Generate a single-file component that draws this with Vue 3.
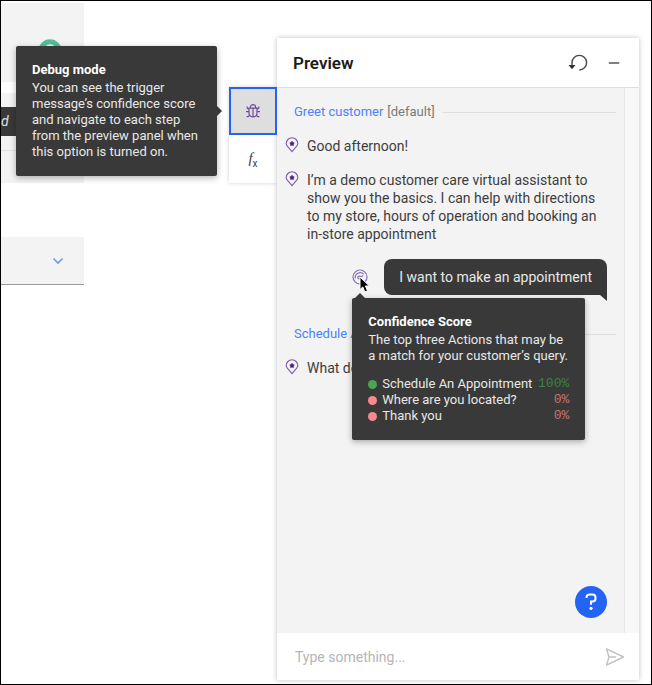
<script setup>
import { ref } from 'vue'

const draft = ref('')
const intro = [
  'Good afternoon!',
  'I’m a demo customer care virtual assistant to show you the basics. I can help with directions to my store, hours of operation and booking an in-store appointment',
]
const scores = [
  { name: 'Schedule An Appointment', value: '100%', kind: 'high' },
  { name: 'Where are you located?', value: '0%', kind: 'low' },
  { name: 'Thank you', value: '0%', kind: 'low' },
]
</script>

<template>
  <div class="frame">
    <svg class="defs" aria-hidden="true">
      <symbol id="pin" viewBox="0 0 14 16">
        <path d="M7 14.6 2.3 9.2A5.7 5.7 0 0 1 1.2 6.6a5.8 5.8 0 1 1 11.6 0 5.7 5.7 0 0 1-1.1 2.6Z" fill="none" stroke="#7d5cae" stroke-width="1.1" />
        <path d="m7 4.3.8 1.2 1.4.4-.9 1.1.1 1.5L7 8l-1.4.5.1-1.5-.9-1.1 1.4-.4Z" fill="#491d8b" stroke="#491d8b" stroke-width=".7" />
      </symbol>
    </svg>

    <section class="canvas" aria-label="Steps">
      <div class="block first">
        <svg class="ring" viewBox="0 0 24 24" aria-hidden="true"><circle cx="12" cy="12" r="9.2" fill="none" stroke="#56bd98" stroke-width="5" /></svg>
      </div>
      <div class="block second">
        <div class="chip">d</div>
        <hr class="divider" />
      </div>
      <button class="block picker" type="button" aria-label="Expand">
        <svg width="12" height="8" viewBox="0 0 12 8" aria-hidden="true"><path d="m1.5 1.5 4.5 4.6 4.5-4.6" fill="none" stroke="#6c98f5" stroke-width="1.5" /></svg>
      </button>
    </section>

    <nav class="rail" aria-label="Preview tools">
      <div class="tool-slot">
        <button class="tool active" type="button" aria-label="Debug mode" aria-describedby="debug-tip">
          <svg width="16" height="16" viewBox="0 0 16 16" fill="none" stroke="#6b4c9c" stroke-width="1.2" aria-hidden="true">
            <path d="M5.4 5V4.2a2.6 2.6 0 0 1 5.2 0V5M4 5.1h8v5.2a4 3.6 0 0 1-8 0ZM8 5.1v8.8M2.2 3.4v1.8L4 6.2M13.8 3.4v1.8L12 6.2M1 8.7h3M12 8.7h3M1.6 13.6h1.6l1.6-1.5M14.4 13.6h-1.6l-1.6-1.5" />
          </svg>
        </button>
        <div id="debug-tip" class="tip debug-tip" role="tooltip">
          <strong>Debug mode</strong>
          <p>You can see the trigger message’s confidence score and navigate to each step from the preview panel when this option is turned on.</p>
        </div>
      </div>
      <button class="tool fx" type="button" aria-label="Variables"><span><i>f</i><sub>x</sub></span></button>
    </nav>

    <main class="panel">
      <header class="head">
        <h1>Preview</h1>
        <button class="icon" type="button" aria-label="Restart">
          <svg width="20" height="18" viewBox="0 0 20 18" aria-hidden="true">
            <path d="M4 13V8.7a7.3 7.3 0 1 1 7.3 7.3" fill="none" stroke="#4a4a4a" stroke-width="1.4" />
            <path d="M.5 11h7L4 15.2Z" fill="#303030" />
          </svg>
        </button>
        <button class="icon" type="button" aria-label="Minimize">
          <svg width="12" height="12" viewBox="0 0 12 12" aria-hidden="true"><path d="M.8 6h10.4" stroke="#4a4a4a" stroke-width="1.4" /></svg>
        </button>
      </header>

      <div class="body">
        <div class="log">
          <h2 class="topic"><a href="#greet">Greet customer</a> <span>[default]</span></h2>
          <div v-for="line in intro" :key="line" class="message">
            <svg class="pin"><use href="#pin" /></svg>
            <p>{{ line }}</p>
          </div>

          <div class="reply">
            <div class="score-slot">
              <button class="score" type="button" aria-label="Confidence score" aria-describedby="score-tip">
                <svg width="16" height="16" viewBox="0 0 16 16" fill="none" stroke="#8a70ba" stroke-width="1.2" aria-hidden="true">
                  <circle cx="8" cy="8" r="7" />
                  <path d="M3.3 9.5a4.9 4.9 0 0 1 8.4-4.3M7.3 8.2l4-1.6" />
                  <circle cx="7.2" cy="8.6" r="1.4" />
                </svg>
              </button>
              <svg class="cursor" width="12" height="18" viewBox="0 0 12 18" aria-hidden="true">
                <path d="M1 1v12.6l2.8-2.7 2.1 5 2.6-1.1-2.1-4.8h4Z" fill="#000" stroke="#fff" stroke-width="1" />
              </svg>
              <div id="score-tip" class="tip score-tip" role="tooltip">
                <strong>Confidence Score</strong>
                <p>The top three Actions that may be a match for your customer’s query.</p>
                <ul>
                  <li v-for="s in scores" :key="s.name" :class="s.kind">
                    <span class="name">{{ s.name }}</span><span class="value">{{ s.value }}</span>
                  </li>
                </ul>
              </div>
            </div>
            <p class="bubble">I want to make an appointment</p>
          </div>

          <h2 class="topic"><a href="#schedule">Schedule An Appointment</a></h2>
          <div class="message">
            <svg class="pin"><use href="#pin" /></svg>
            <p>What do you need?</p>
          </div>

          <button class="help" type="button" aria-label="Help">
            <svg width="14" height="20" viewBox="0 0 14 20" aria-hidden="true">
              <path d="M2.5 6V5.4a3 3 0 0 1 3-3h3a3 3 0 0 1 3 3v1.1a3 3 0 0 1-3 3H7v3.3" fill="none" stroke="#fff" stroke-width="2" />
              <circle cx="7" cy="16.3" r="1.6" fill="#fff" />
            </svg>
          </button>
        </div>
        <div class="track"></div>
      </div>

      <form class="composer" @submit.prevent>
        <input v-model="draft" type="text" aria-label="Message" placeholder="Type something..." />
        <button class="icon" type="submit" aria-label="Send">
          <svg width="20" height="20" viewBox="0 0 20 20" fill="none" stroke="#c2c2c2" stroke-width="1.4" stroke-linejoin="round" aria-hidden="true">
            <path d="m1.5 1.8 17 8.2-17 8.2L4 10ZM4 10h7" />
          </svg>
        </button>
      </form>
    </main>
  </div>
</template>

<style>
body {
  margin: 0;
}
</style>

<style scoped>
* {
  box-sizing: border-box;
}
.frame {
  display: grid;
  grid-template-columns: 83fr 145fr 48px 362fr;
  min-height: 100vh;
  padding-right: 12px;
  border: 1px solid #000;
  background: #fff;
  color: #3d3d3d;
  font-family: Roboto, "Liberation Sans", sans-serif;
  font-size: 14px;
  line-height: 18px;
}
.defs {
  position: absolute;
  width: 0;
  height: 0;
}
h1,
h2,
p,
ul {
  margin: 0;
  padding: 0;
}
button,
input {
  margin: 0;
  padding: 0;
  border: 0;
  background: none;
  font: inherit;
  color: inherit;
}
.icon {
  display: flex;
}
.canvas {
  display: flex;
  grid-column: 1;
  flex-direction: column;
  padding-top: 2px;
}
.block {
  background: #f3f3f3;
}
.first {
  display: flex;
  justify-content: flex-end;
  height: 79px;
  padding: 36px 22px 0 0;
}
.ring {
  width: 24px;
  height: 24px;
}
.second {
  height: 90px;
  margin-top: 11px;
  padding-top: 14px;
}
.chip {
  height: 29px;
  background: #393939;
  color: #e0e0e0;
  font-style: italic;
  line-height: 29px;
}
.divider {
  height: 1px;
  margin: 14px 0 0;
  border: 0;
  background: #e0e0e0;
}
.picker {
  display: flex;
  align-items: center;
  justify-content: flex-end;
  height: 48px;
  margin-top: 54px;
  padding-right: 20px;
  border-bottom: 1px solid #9a9a9a;
}
.rail {
  grid-column: 3;
  align-self: start;
  margin-top: 86px;
  background: #fff;
  box-shadow: 0 0 4px rgba(0, 0, 0, 0.18);
}
.tool-slot {
  position: relative;
}
.tool {
  display: flex;
  align-items: center;
  justify-content: center;
  width: 100%;
  height: 48px;
}
.active {
  border: 2px solid #2464f4;
  background: #dedede;
}
.fx i {
  font: italic 15px "Liberation Serif", serif;
}
.fx sub {
  font-size: 10px;
  line-height: 12px;
}
.tip {
  position: absolute;
  z-index: 2;
  padding: 16px;
  border-radius: 2px;
  background: #393939;
  box-shadow: 0 2px 6px rgba(0, 0, 0, 0.3);
  color: #e8e8e8;
  font-size: 13px;
  line-height: 16px;
}
.tip::before {
  position: absolute;
  border: 5px solid transparent;
  content: "";
}
.tip strong {
  display: block;
  margin-bottom: 2px;
  color: #fff;
}
.debug-tip {
  top: 50%;
  right: calc(100% + 12px);
  width: 201px;
  transform: translateY(-50%);
}
.debug-tip::before {
  top: calc(50% - 5px);
  left: 100%;
  border-left-color: #393939;
}
.panel {
  display: flex;
  grid-column: 4;
  flex-direction: column;
  min-width: 0;
  margin: 37px 0 4px;
  background: #fff;
  box-shadow: 0 0 5px rgba(0, 0, 0, 0.25);
}
.head {
  display: flex;
  align-items: center;
  gap: 20px;
  height: 50px;
  padding: 0 19px 0 16px;
  border-bottom: 1px solid #dedede;
}
.head h1 {
  flex: 1;
  color: #1c1c1c;
  font-size: 17px;
  font-weight: 600;
  line-height: 20px;
}
.body {
  display: flex;
  flex: 1;
  background: #f3f3f3;
}
.log {
  display: flex;
  flex: 1;
  flex-direction: column;
  min-width: 0;
  padding: 15px 8px;
}
.track {
  width: 15px;
  border-left: 1px solid #e8e8e8;
  background: #f8f8f8;
}
.topic {
  display: flex;
  align-items: center;
  gap: 4px;
  padding-left: 9px;
  font-size: 13px;
  font-weight: 400;
  white-space: nowrap;
}
.topic::after {
  flex: 1;
  height: 1px;
  margin-left: 4px;
  background: #dedede;
  content: "";
}
.topic a {
  color: #4c82f7;
  text-decoration: none;
}
.topic span {
  color: #7a7a7a;
}
.message {
  display: flex;
  gap: 8px;
  margin-top: 16px;
  padding-right: 14px;
}
.pin {
  flex: none;
  width: 14px;
  height: 16px;
}
.reply {
  display: flex;
  align-items: center;
  justify-content: flex-end;
  gap: 16px;
  margin: 16px 9px 30px;
}
.score-slot {
  position: relative;
}
.score {
  display: flex;
}
.cursor {
  position: absolute;
  top: 7px;
  left: 7px;
  z-index: 3;
}
.score-tip {
  top: calc(100% + 13px);
  left: 0;
  width: 233px;
}
.score-tip::before {
  bottom: 100%;
  left: 3px;
  border-bottom-color: #393939;
}
.score-tip ul {
  margin-top: 12px;
  list-style: none;
}
.score-tip li {
  display: flex;
  align-items: center;
  gap: 5px;
}
.score-tip li::before {
  width: 9px;
  height: 9px;
  border-radius: 50%;
  background: currentColor;
  content: "";
}
.name {
  flex: 1;
  color: #e8e8e8;
}
.value {
  font-family: "Liberation Mono", monospace;
}
.high {
  color: #4fa354;
}
.high .value {
  color: #3f8044;
}
.low {
  color: #f58a8d;
}
.low .value {
  color: #c77376;
}
.bubble {
  position: relative;
  padding: 9px 15px;
  border-radius: 8px 8px 0 8px;
  background: #393939;
  color: #e8e8e8;
}
.bubble::after {
  position: absolute;
  top: 100%;
  right: 0;
  border-top: 6px solid #393939;
  border-left: 7px solid transparent;
  content: "";
}
.help {
  display: flex;
  align-items: center;
  align-self: flex-end;
  justify-content: center;
  width: 32px;
  height: 32px;
  margin: auto 9px 0 0;
  border-radius: 50%;
  background: #2464f4;
}
.composer {
  display: flex;
  align-items: center;
  height: 47px;
  padding: 0 14px 0 18px;
}
.composer input {
  flex: 1;
  min-width: 0;
  outline: 0;
}
.composer input::placeholder {
  color: #b5b5b5;
  opacity: 1;
}
</style>
